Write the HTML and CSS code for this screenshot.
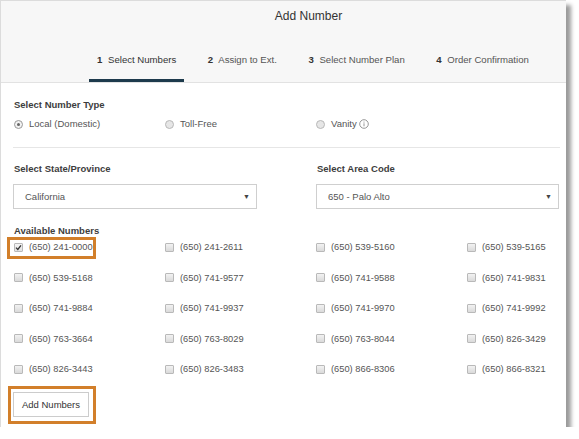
FILE: index.html
```html
<!DOCTYPE html>
<html>
<head>
<meta charset="utf-8">
<link rel="stylesheet" href="styles.css">
</head>
<body>
<div class="card">
  <div class="header">
    <div class="title">Add Number</div>
    <div class="tabs">
      <div class="tab active"><b>1</b> Select Numbers</div>
      <div class="tab"><b>2</b> Assign to Ext.</div>
      <div class="tab"><b>3</b> Select Number Plan</div>
      <div class="tab"><b>4</b> Order Confirmation</div>
    </div>
  </div>
  <div class="content">
    <div class="label first">Select Number Type</div>
    <div class="radios">
      <div class="opt"><span class="radio on"></span>Local (Domestic)</div>
      <div class="opt"><span class="radio"></span>Toll-Free</div>
      <div class="opt"><span class="radio"></span>Vanity<svg class="info" width="10" height="10" viewBox="0 0 10 10"><circle cx="5" cy="5" r="4.3" fill="none" stroke="#8a8a8a" stroke-width="0.9"/><circle cx="5" cy="3" r="0.6" fill="#8a8a8a"/><path d="M5 4.3V7.3" stroke="#8a8a8a" stroke-width="0.9"/></svg></div>
    </div>
    <div class="divider"></div>
    <div class="selects">
      <div class="field">
        <div class="label">Select State/Province</div>
        <div class="select"><span>California</span><span class="arrow">&#9660;</span></div>
      </div>
      <div class="field">
        <div class="label">Select Area Code</div>
        <div class="select"><span>650 - Palo Alto</span><span class="arrow">&#9660;</span></div>
      </div>
    </div>
    <div class="label avail">Available Numbers</div>
    <div class="grid">
      <div class="num hl"><span class="cb on"><svg width="7" height="7" viewBox="0 0 7 7"><path d="M1 3.6L2.8 5.4L6 1.3" fill="none" stroke="#333" stroke-width="1.3"/></svg></span>(650) 241-0000</div>
      <div class="num"><span class="cb"></span>(650) 241-2611</div>
      <div class="num"><span class="cb"></span>(650) 539-5160</div>
      <div class="num"><span class="cb"></span>(650) 539-5165</div>
      <div class="num"><span class="cb"></span>(650) 539-5168</div>
      <div class="num"><span class="cb"></span>(650) 741-9577</div>
      <div class="num"><span class="cb"></span>(650) 741-9588</div>
      <div class="num"><span class="cb"></span>(650) 741-9831</div>
      <div class="num"><span class="cb"></span>(650) 741-9884</div>
      <div class="num"><span class="cb"></span>(650) 741-9937</div>
      <div class="num"><span class="cb"></span>(650) 741-9970</div>
      <div class="num"><span class="cb"></span>(650) 741-9992</div>
      <div class="num"><span class="cb"></span>(650) 763-3664</div>
      <div class="num"><span class="cb"></span>(650) 763-8029</div>
      <div class="num"><span class="cb"></span>(650) 763-8044</div>
      <div class="num"><span class="cb"></span>(650) 826-3429</div>
      <div class="num"><span class="cb"></span>(650) 826-3443</div>
      <div class="num"><span class="cb"></span>(650) 826-3483</div>
      <div class="num"><span class="cb"></span>(650) 866-8306</div>
      <div class="num"><span class="cb"></span>(650) 866-8321</div>
    </div>
    <div class="btn-wrap"><button class="btn">Add Numbers</button></div>
  </div>
</div>
</body>
</html>
```
FILE: styles.css
```css
html, body {
  margin: 0;
  padding: 0;
  background: #ffffff;
}
body {
  font-family: "Liberation Sans", Arial, sans-serif;
  color: #555;
}
.card {
  box-sizing: border-box;
  width: 566px;
  height: 427px;
  background: #fff;
  border-top: 1px solid #dcdcdc;
  border-left: 1px solid #dcdcdc;
  box-shadow: 5px 5px 4px #9c9c9c;
}
.header {
  height: 81px;
  background: #f7f7f7;
  border-bottom: 1px solid #e2e2e2;
  display: flex;
  flex-direction: column;
  justify-content: space-between;
}
.title {
  padding-top: 8px;
  padding-left: 50px;
  text-align: center;
  font-size: 12px;
  line-height: 14px;
  color: #333;
}
.tabs {
  display: flex;
  gap: 15.5px;
  padding-left: 88px;
}
.tab {
  font-size: 9.6px;
  line-height: 12px;
  padding: 0 8px 13px;
  border-bottom: 3px solid transparent;
  color: #555;
  white-space: nowrap;
}
.tab b {
  margin-right: 3px;
  color: #333;
}
.tab.active {
  border-bottom-color: #1d3a4c;
  color: #333;
}
.content {
  padding: 0 6px 0 13px;
}
.label {
  font-size: 9.5px;
  line-height: 12px;
  font-weight: bold;
  color: #3d3d3d;
}
.label.first {
  padding-top: 16px;
}
.radios {
  display: grid;
  grid-template-columns: repeat(3, 151px);
  margin-top: 7px;
}
.opt {
  display: flex;
  align-items: center;
  font-size: 9.5px;
  line-height: 12px;
  color: #555;
}
.radio {
  box-sizing: border-box;
  width: 9px;
  height: 9px;
  border-radius: 50%;
  border: 1px solid #b8b8b8;
  background: #e6e6e6;
  margin-right: 6px;
  position: relative;
}
.radio.on {
  background: #f2f2f2;
  border-color: #9a9a9a;
}
.radio.on::before {
  content: "";
  position: absolute;
  left: 2px;
  top: 2px;
  width: 3px;
  height: 3px;
  border-radius: 50%;
  background: #666;
}
.info {
  margin-left: 2px;
}
.divider {
  height: 1px;
  background: #e6e6e6;
  margin: 17px 0 0 -1px;
}
.selects {
  display: grid;
  grid-template-columns: 244px 243px;
  column-gap: 59px;
  margin-top: 15px;
  margin-left: -1px;
}
.field .label {
  padding-left: 1px;
}
.select {
  box-sizing: border-box;
  margin-top: 9px;
  height: 25px;
  border: 1px solid #cfcfcf;
  background: #fff;
  display: flex;
  align-items: center;
  justify-content: space-between;
  padding: 0 6px 0 11px;
  font-size: 9.5px;
  color: #555;
}
.arrow {
  font-size: 7px;
  color: #444;
}
.label.avail {
  margin-top: 16px;
}
.grid {
  display: grid;
  grid-template-columns: repeat(4, 151px);
  grid-auto-rows: 12px;
  row-gap: 18.5px;
  margin-top: 4px;
}
.num {
  display: flex;
  align-items: center;
  font-size: 9.3px;
  line-height: 12px;
  color: #555;
  position: relative;
  width: max-content;
}
.cb {
  box-sizing: border-box;
  width: 9px;
  height: 9px;
  border: 1px solid #b9b9b9;
  border-radius: 1px;
  background: linear-gradient(#f2f2f2, #dadada);
  margin-right: 6px;
  display: flex;
  align-items: center;
  justify-content: center;
}
.cb.on {
  background: linear-gradient(#f5f5f5, #e2e2e2);
}
.num.hl::after {
  content: "";
  position: absolute;
  left: -7px;
  right: -3px;
  top: -4px;
  bottom: -6px;
  border: 3px solid #d27f2a;
}
.btn-wrap {
  margin-top: 17px;
  position: relative;
  width: max-content;
  margin-left: -1px;
}
.btn-wrap::after {
  content: "";
  position: absolute;
  left: -5px;
  right: -7px;
  top: -6px;
  bottom: -7px;
  border: 3px solid #d27f2a;
}
.btn {
  display: block;
  box-sizing: border-box;
  width: 76px;
  height: 25px;
  padding: 0;
  border: 1px solid #cccccc;
  background: #fff;
  font-family: "Liberation Sans", Arial, sans-serif;
  font-size: 9.5px;
  color: #333;
}
```
